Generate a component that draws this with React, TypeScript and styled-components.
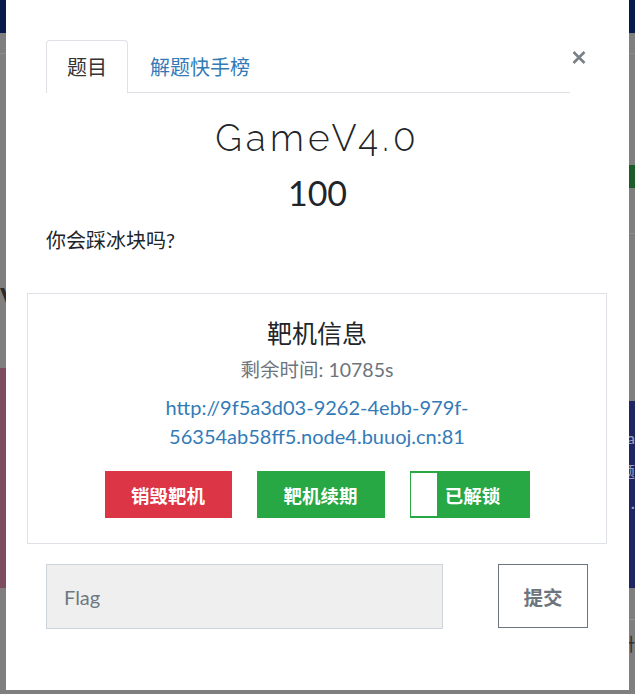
import React from "react";
import styled, { createGlobalStyle } from "styled-components";

const Global = createGlobalStyle`
  html, body { margin: 0; padding: 0; }
  body {
    background: #7f7f7f;
    font-family: Lato, "Noto Sans CJK SC", sans-serif;
    overflow: hidden;
    width: 635px;
    height: 694px;
  }
`;

const cjk = `Lato, "Noto Sans CJK SC", sans-serif`;

/* ---------- dimmed page behind the modal ---------- */
const Page = styled.div`
  width: 635px;
  height: 694px;
  display: flex;
  flex-direction: column;
  background: #7f7f7f;
`;
const NavBar = styled.div`
  height: 33px;
  background: #081a4b;
  flex: none;
`;
const SubBar = styled.div`
  height: 20px;
  border-bottom: 1px solid #8c8c8c;
  flex: none;
`;
const BadgeRow = styled.div`
  margin-top: 111px;
  height: 23px;
  display: flex;
  justify-content: flex-end;
  flex: none;
`;
const GreenBadge = styled.div`
  width: 60px;
  background: #1d5b2b;
  color: #c8d8c8;
  font: 14px ${cjk};
  line-height: 23px;
  padding-left: 8px;
  box-sizing: border-box;
`;
const Divider = styled.div`
  margin-top: 45px;
  margin-left: 320px;
  height: 1px;
  background: #8d8d8d;
  flex: none;
`;
const BigHeading = styled.div`
  margin-top: 48px;
  height: 86px;
  font: 40px ${cjk};
  color: #2a2a2a;
  line-height: 40px;
  flex: none;
`;
const CardsRow = styled.div`
  display: flex;
  justify-content: space-between;
  height: 220px;
  flex: none;
`;
const PinkCard = styled.div`
  width: 300px;
  background: #7d4c5e;
`;
const NavyCard = styled.div`
  width: 300px;
  margin-top: 33px;
  background: #1f2562;
  color: #9aa0c0;
  font: 16px ${cjk};
  text-align: right;
  padding-top: 20px;
  line-height: 34px;
  box-sizing: border-box;
`;
const FooterLine = styled.div`
  margin-top: 31px;
  margin-left: 400px;
  height: 1px;
  background: #909090;
  flex: none;
`;
const FooterText = styled.div`
  text-align: right;
  font: 18px ${cjk};
  color: #333;
  margin-top: 10px;
`;

/* ---------- modal ---------- */
const Modal = styled.div`
  position: fixed;
  left: 6px;
  top: 0;
  width: 623px;
  height: 690px;
  background: #fff;
  box-sizing: border-box;
  color: #212529;
  font-family: ${cjk};
`;
const Header = styled.div`
  display: flex;
  align-items: flex-start;
  padding: 40px 42px 0 40px;
`;
const Tabs = styled.div`
  flex: 1;
  display: flex;
  align-items: flex-start;
  border-bottom: 1px solid #dee2e6;
`;
const Tab = styled.div<{ $active?: boolean }>`
  box-sizing: border-box;
  height: ${(p) => (p.$active ? "53px" : "52px")};
  padding: 0 ${(p) => (p.$active ? "20px" : "21px")};
  font: 20px ${cjk};
  line-height: 52px;
  color: ${(p) => (p.$active ? "#333" : "#337ab7")};
  border: 1px solid ${(p) => (p.$active ? "#dee2e6" : "transparent")};
  border-bottom: none;
  border-radius: 4px 4px 0 0;
  background: ${(p) => (p.$active ? "#fff" : "transparent")};
  margin-bottom: ${(p) => (p.$active ? "-1px" : "0")};
`;
const Close = styled.button`
  border: none;
  background: none;
  padding: 0;
  margin: 10px 0 0 1px;
  width: 16px;
  height: 14px;
  display: flex;
  align-items: center;
  justify-content: center;
  cursor: pointer;
`;
const Title = styled.h2`
  margin: 23px 0 0;
  text-align: center;
  font: 300 37px Raleway, Lato, sans-serif;
  letter-spacing: 4.2px;
  line-height: 44px;
  color: #212529;
`;
const Score = styled.div`
  margin-top: 11px;
  text-align: center;
  font: 400 34px Lato, sans-serif;
  line-height: 44px;
`;
const Desc = styled.p`
  margin: 10px 0 0;
  padding-left: 40px;
  font: 20px ${cjk};
  line-height: 30px;
`;
const Card = styled.div`
  margin: 38px 22px 0 21px;
  border: 1px solid #dee2e6;
  padding: 21px 0 25px;
  text-align: center;
`;
const CardTitle = styled.div`
  font: 25px ${cjk};
  line-height: 36px;
  color: #212529;
`;
const Remain = styled.div`
  margin-top: 4px;
  font: 19.5px ${cjk};
  line-height: 30px;
  color: #6c757d;
`;
const Link = styled.a`
  display: block;
  margin: 8px auto 0;
  width: 345px;
  font: 20px Lato, sans-serif;
  line-height: 29px;
  color: #337ab7;
  text-decoration: none;
`;
const Buttons = styled.div`
  margin-top: 20px;
  display: flex;
  justify-content: center;
  gap: 25px;
`;
const Btn = styled.button<{ $bg: string; $w: number }>`
  width: ${(p) => p.$w}px;
  height: 47px;
  border: none;
  background: ${(p) => p.$bg};
  color: #fff;
  font: 700 18.5px ${cjk};
  padding: 0;
  cursor: pointer;
`;
const ToggleBtn = styled.button`
  position: relative;
  width: 120px;
  height: 47px;
  border: 1px solid #28a745;
  border-width: 2px 1px;
  background: #28a745;
  color: #fff;
  font: 700 18.5px ${cjk};
  padding: 0 0 0 6px;
  cursor: pointer;
  &::before {
    content: "";
    position: absolute;
    left: 0;
    top: 0;
    bottom: 0;
    width: 26px;
    background: #fff;
  }
`;
const FormRow = styled.div`
  margin: 20px 41px 0 40px;
  display: flex;
  justify-content: space-between;
`;
const FlagInput = styled.input`
  width: 397px;
  height: 65px;
  box-sizing: border-box;
  background: #efefef;
  border: 1px solid #ccd3db;
  padding: 0 17px;
  font: 20px Lato, sans-serif;
  color: #333;
  outline: none;
  &::placeholder { color: #6f7880; }
`;
const Submit = styled.button`
  width: 90px;
  height: 64px;
  box-sizing: border-box;
  background: #fff;
  border: 1.5px solid #6c757d;
  color: #6c757d;
  font: 700 19.5px ${cjk};
  padding: 0;
  cursor: pointer;
`;

export default function App() {
  return (
    <>
      <Global />
      <Page>
        <NavBar />
        <SubBar />
        <BadgeRow>
          <GreenBadge>人</GreenBadge>
        </BadgeRow>
        <Divider />
        <BigHeading>V</BigHeading>
        <CardsRow>
          <PinkCard />
          <NavyCard>
            a<br />题<br />·
          </NavyCard>
        </CardsRow>
        <FooterLine />
        <FooterText>卅</FooterText>
      </Page>
      <Modal>
        <Header>
          <Tabs>
            <Tab $active>题目</Tab>
            <Tab>解题快手榜</Tab>
          </Tabs>
          <Close aria-label="close">
            <svg width="14" height="13" viewBox="0 0 14 13">
              <path d="M1.5 1 L12.5 12 M12.5 1 L1.5 12" stroke="#7a8087" strokeWidth="2.6" />
            </svg>
          </Close>
        </Header>
        <Title>GameV4.0</Title>
        <Score>100</Score>
        <Desc>你会踩冰块吗?</Desc>
        <Card>
          <CardTitle>靶机信息</CardTitle>
          <Remain>剩余时间: 10785s</Remain>
          <Link href="#">http://9f5a3d03-9262-4ebb-979f-56354ab58ff5.node4.buuoj.cn:81</Link>
          <Buttons>
            <Btn $bg="#dc3545" $w={127}>销毁靶机</Btn>
            <Btn $bg="#28a745" $w={128}>靶机续期</Btn>
            <ToggleBtn>已解锁</ToggleBtn>
          </Buttons>
        </Card>
        <FormRow>
          <FlagInput placeholder="Flag" />
          <Submit>提交</Submit>
        </FormRow>
      </Modal>
    </>
  );
}
